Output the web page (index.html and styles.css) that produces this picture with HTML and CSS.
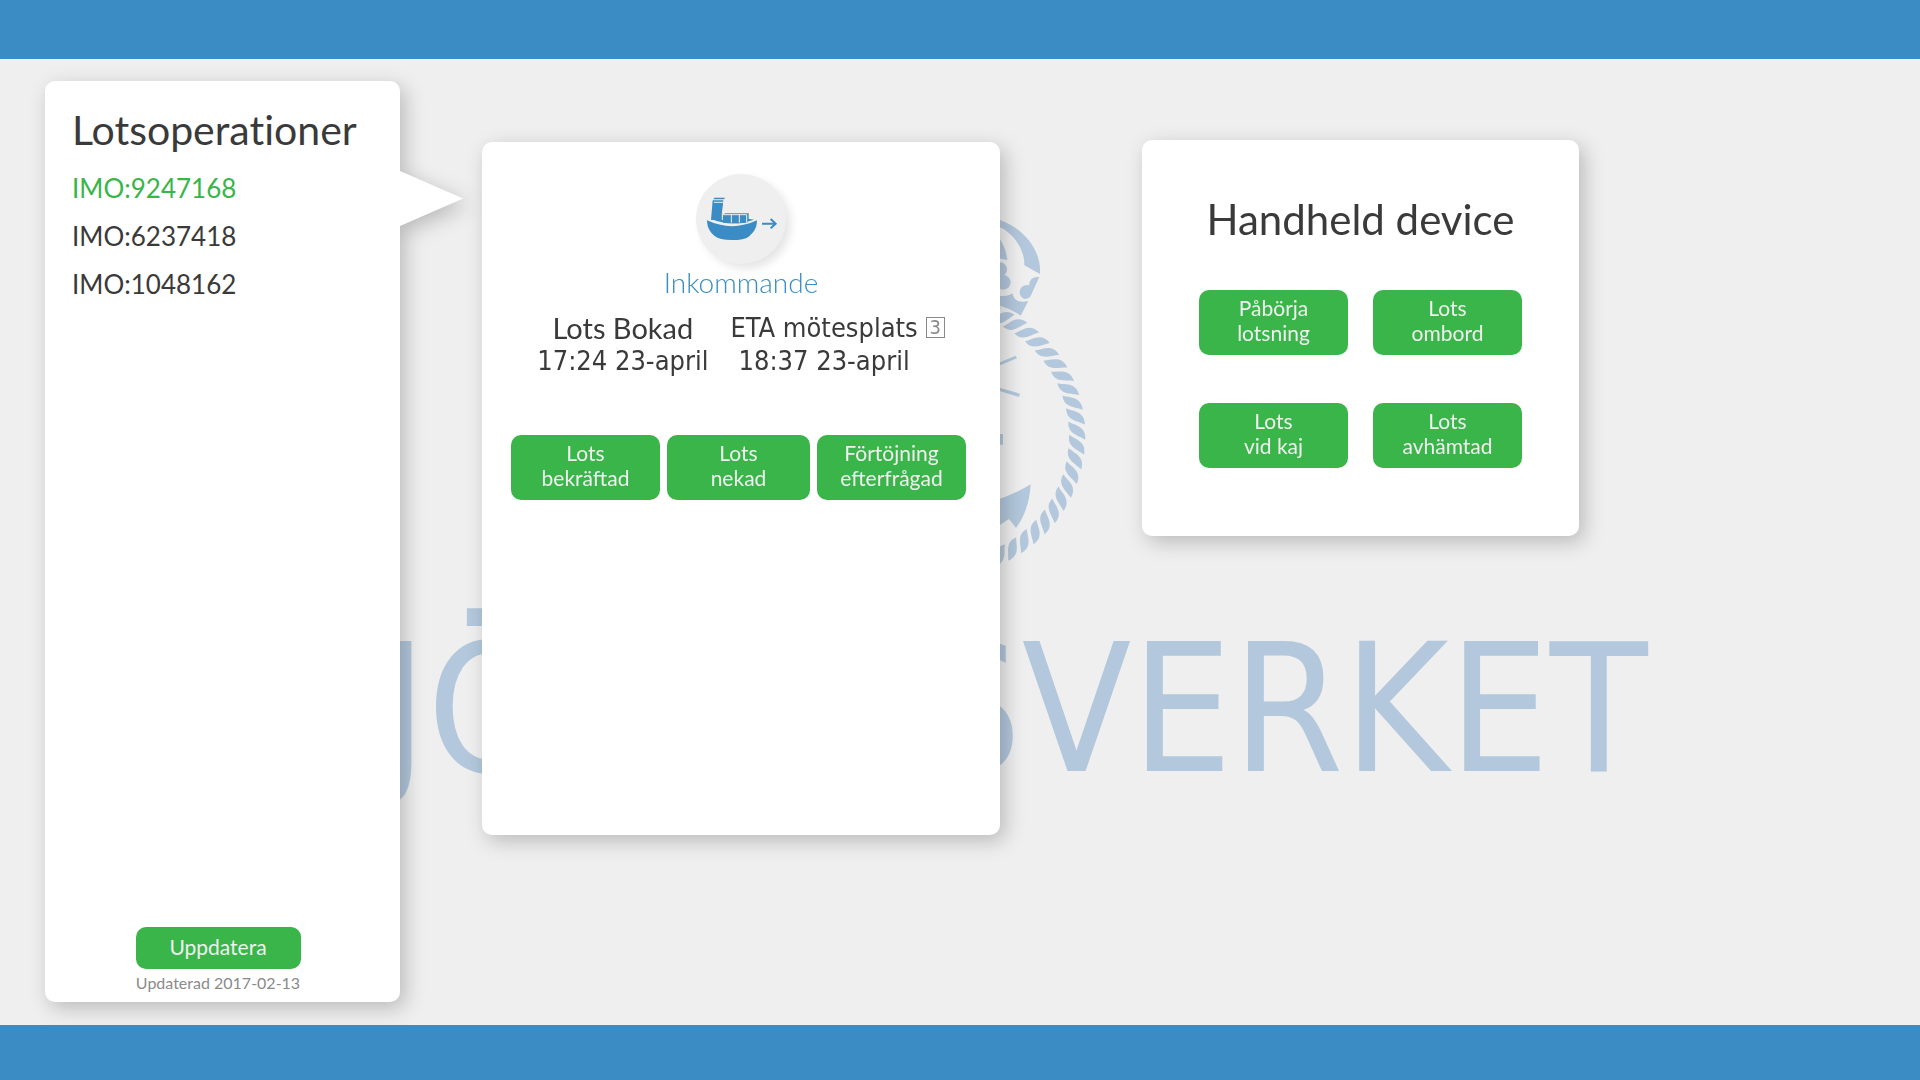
FILE: index.html
```html
<!DOCTYPE html>
<html lang="sv">
<head>
<meta charset="utf-8">
<meta name="viewport" content="width=device-width, initial-scale=1">
<title>Lotsoperationer</title>
<link rel="stylesheet" href="styles.css">
</head>
<body>
<header class="bar bar-top"></header>
<main class="stage">
  <svg class="watermark" viewBox="0 0 1920 966" preserveAspectRatio="xMidYMid meet" aria-hidden="true">
    <defs>
      <path id="strand" d="M123,-9C128,-5 141,-4 139,10C132,5 121,3 123,-9Z"/>
      <g id="strands">
        <use href="#strand"/>
        <use href="#strand" transform="rotate(6.2)"/>
        <use href="#strand" transform="rotate(12.4)"/>
        <use href="#strand" transform="rotate(18.6)"/>
      </g>
    </defs>
    <!-- rope ring -->
    <g transform="translate(946 377)">
      <use href="#strands" transform="rotate(-77)"/>
      <use href="#strands" transform="rotate(-52.2)"/>
      <use href="#strands" transform="rotate(-27.4)"/>
      <use href="#strands" transform="rotate(-2.6)"/>
      <use href="#strands" transform="rotate(22.2)"/>
      <use href="#strands" transform="rotate(47)"/>
    </g>
    <!-- crown, compass ticks and anchor fluke -->
    <g transform="translate(980 141) scale(.3333)">
      <path d="M40,54Q52,56 60,60C130,85 185,150 180,222L133,196C135,150 100,100 60,82L40,74Z"/>
      <path d="M40,90L60,118Q78,145 82,180L40,172Z"/>
      <circle cx="60" cy="208" r="21"/>
      <circle cx="70" cy="247" r="22"/>
      <path d="M178,231Q149,228 147,256A21,21 0 1 0 134,297Q148,296 152,288Z"/>
      <path d="M40,310L60,317Q95,327 122,347L145,303Q104,313 97,280Q85,290 60,288L40,284Z"/>
      <path d="M40,495L107,467L111,475L40,504ZM40,558L120,581L117,591L40,567ZM40,702H69V734H40Z"/>
      <path d="M152,853Q148,930 108,984L87,957L40,988V904Q110,880 152,853Z"/>
    </g>
    <text class="wordmark" y="712"><tspan x="278">SJÖ</tspan><tspan x="920" text-anchor="end">FART</tspan><tspan x="920" text-anchor="start">SVERKET</tspan></text>
  </svg>

  <aside class="panel operations">
    <h1 class="title">Lotsoperationer</h1>
    <ul class="ships">
      <li><a class="ship selected" href="#imo-9247168">IMO:9247168</a></li>
      <li><a class="ship" href="#imo-6237418">IMO:6237418</a></li>
      <li><a class="ship" href="#imo-1048162">IMO:1048162</a></li>
    </ul>
    <div class="refresh">
      <button class="btn btn-wide" type="button">Uppdatera</button>
      <p class="updated">Updaterad 2017-02-13</p>
    </div>
  </aside>

  <section class="panel details">
    <div class="status-icon">
      <svg viewBox="0 0 270 270" aria-hidden="true">
        <path d="M33,139Q108,174 183,139C183,165 170,178 158,188Q145,198 108,198Q70,198 56,186C42,175 34,162 33,139Z"/>
        <path d="M46,135Q108,124 174,137Q108,160 46,135Z"/>
        <path d="M50,79H83L78,138H45ZM55,71H87L84,76H52Z"/>
        <path d="M54,85H81" class="cut"/>
        <path d="M84,78L79,118V138" class="cut"/>
        <path d="M81,124L87,118H158V141L152,146Q110,150 81,146Z"/>
        <path d="M83,122H152V146M106,146V122M130,146V122" class="cut"/>
        <path d="M198,149H240M224,135L239,149L224,163" class="arrow"/>
      </svg>
    </div>
    <h2 class="status">Inkommande</h2>
    <dl class="times">
      <div class="time">
        <dt class="time-name">Lots Bokad</dt>
        <dd>17:24 23-april</dd>
      </div>
      <div class="time time-eta">
        <dt>ETA mötesplats</dt>
        <dd class="count">3</dd>
        <dd>18:37 23-april</dd>
      </div>
    </dl>
    <div class="actions">
      <button class="btn" type="button">Lots<br>bekräftad</button>
      <button class="btn" type="button">Lots<br>nekad</button>
      <button class="btn" type="button">Förtöjning<br>efterfrågad</button>
    </div>
  </section>

  <section class="panel handheld">
    <h2 class="title">Handheld device</h2>
    <div class="device-actions">
      <button class="btn" type="button">Påbörja<br>lotsning</button>
      <button class="btn" type="button">Lots<br>ombord</button>
      <button class="btn" type="button">Lots<br>vid kaj</button>
      <button class="btn" type="button">Lots<br>avhämtad</button>
    </div>
  </section>
</main>
<footer class="bar bar-bottom"></footer>
</body>
</html>
```
FILE: styles.css
```css
* { box-sizing: border-box; }

body {
  margin: 0;
  min-height: 100vh;
  display: flex;
  flex-direction: column;
  background: #efefef;
  color: #3a3a3a;
  font-family: Lato, "Open Sans", sans-serif;
  font-variant-ligatures: none;
}

h1, h2, p, ul, dl, dd { margin: 0; padding: 0; }

.bar { background: #3b8cc4; position: relative; z-index: 1; }
.bar-top { height: 59px; }
.bar-bottom { height: 55px; }

.stage {
  position: relative;
  flex: 1;
  display: grid;
  grid-template-columns: 355fr 82fr 518fr 142fr 437fr 296fr;
  align-items: start;
  padding: 22px 45px 23px;
}

.watermark {
  position: absolute;
  inset: 0;
  width: 100%;
  height: 100%;
  fill: #b3c8dc;
}

.wordmark {
  font-family: "DejaVu Sans Condensed", "DejaVu Sans", sans-serif;
  font-size: 178px;
}

.panel {
  position: relative;
  background: #fff;
  border-radius: 10px;
  filter: drop-shadow(5px 6px 10px rgba(0, 0, 0, 0.22));
}

.title { font-weight: 400; font-size: 42px; line-height: 50px; }

.operations {
  grid-column: 1;
  align-self: stretch;
  display: flex;
  flex-direction: column;
  padding: 24px 36px 8px 27px;
}

.operations .title { font-size: 41px; }

/* Pointer towards the details of the selected ship */
.operations::after {
  content: "";
  position: absolute;
  left: 100%;
  top: 90px;
  width: 63px;
  height: 55px;
  background: #fff;
  clip-path: polygon(0 0, 100% 50%, 0 100%);
}

.ships {
  list-style: none;
  display: flex;
  flex-direction: column;
  gap: 16px;
  margin-top: 17px;
}

.ship {
  display: block;
  color: inherit;
  text-decoration: none;
  font-size: 26px;
  line-height: 32px;
}

.selected { color: #39b54a; }

.refresh {
  margin-top: auto;
  display: flex;
  flex-direction: column;
  align-items: center;
}

.updated { margin-top: 2px; font-size: 16px; line-height: 23px; color: #8a8a8a; }

.btn {
  border: 0;
  border-radius: 10px;
  background: #3ab54a;
  color: #efefef;
  font: 400 21px/25px Lato, "Open Sans", sans-serif;
  padding: 5px 8px 10px;
  cursor: pointer;
}

.btn-wide { padding: 7px 32px 10px; min-width: 165px; }

.details {
  grid-column: 3;
  margin-top: 61px;
  padding: 32px 29px 335px;
  text-align: center;
}

.status-icon {
  width: 90px;
  height: 90px;
  margin: 0 auto;
  border-radius: 50%;
  background: #efefef;
  box-shadow: 5px 5px 8px rgba(0, 0, 0, 0.1);
}

.status-icon svg { display: block; width: 100%; height: 100%; fill: #3b8cc4; }
.status-icon .cut { fill: none; stroke: #efefef; stroke-width: 3; }
.status-icon .arrow { fill: none; stroke: #3b8cc4; stroke-width: 6; }

.status {
  margin-top: 2px;
  font-weight: 300;
  font-size: 28px;
  line-height: 32px;
  color: #3b8cc4;
}

.times {
  display: flex;
  justify-content: center;
  gap: 22px;
  margin-top: 13px;
  font: 27px/33px "DejaVu Sans Condensed", "DejaVu Sans", sans-serif;
  white-space: nowrap;
}

.time-name { font-family: Lato, "Open Sans", sans-serif; font-size: 29px; }

.time-eta {
  display: grid;
  grid-template-columns: auto auto;
  column-gap: 8px;
  align-items: center;
}

.count {
  width: 19px;
  border: 1px solid #8a8a8a;
  color: #8a8a8a;
  font-size: 20px;
  line-height: 19px;
}

.actions {
  display: grid;
  grid-template-columns: 149fr 143fr 149fr;
  gap: 7px;
  margin-top: 58px;
  padding-right: 5px;
}

.handheld {
  grid-column: 5;
  margin-top: 59px;
  padding: 54px 57px 68px;
  text-align: center;
}

.device-actions {
  display: grid;
  grid-template-columns: 1fr 1fr;
  gap: 48px 25px;
  margin-top: 46px;
}
```
